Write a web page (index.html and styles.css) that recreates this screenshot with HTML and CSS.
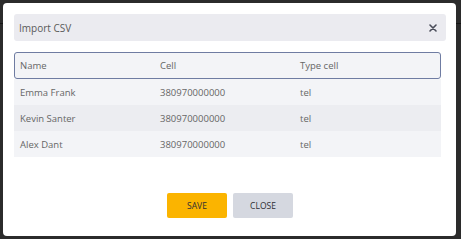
FILE: index.html
```html
<!DOCTYPE html>
<html lang="en">
<head>
  <meta charset="UTF-8">
  <title>Import CSV</title>
  <link rel="stylesheet" href="styles.css">
</head>
<body>
  <div class="modal">
    <div class="modal-head">
      <span class="modal-title">Import CSV</span>
      <button class="close-x" aria-label="Close">
        <svg width="8" height="8" viewBox="0 0 8 8">
          <path d="M1 1L7 7M7 1L1 7" stroke="#4a4d5a" stroke-width="1.6" stroke-linecap="round"/>
        </svg>
      </button>
    </div>

    <div class="csv-table">
      <div class="row head">
        <div>Name</div><div>Cell</div><div>Type cell</div>
      </div>
      <div class="row">
        <div>Emma Frank</div><div>380970000000</div><div>tel</div>
      </div>
      <div class="row alt">
        <div>Kevin Santer</div><div>380970000000</div><div>tel</div>
      </div>
      <div class="row">
        <div>Alex Dant</div><div>380970000000</div><div>tel</div>
      </div>
    </div>

    <div class="actions">
      <button class="btn save">SAVE</button>
      <button class="btn close">CLOSE</button>
    </div>
  </div>
</body>
</html>
```

FILE: styles.css
```css
/* Page behind the dialog (dark overlay with the header edge showing through) */
body {
  margin: 0;
  padding: 3px 5px 3px 3px;
  height: 239px;
  box-sizing: border-box;
  background: linear-gradient(#2b2b2b 23px, #151515 23px, #151515 24px, #2b2b2b 24px);
  font-family: "Open Sans", sans-serif;
  color: #666;
}

.modal {
  background: #fff;
  border-radius: 4px;
  height: 233px;
  box-sizing: border-box;
  padding: 11px 10px 0 11px;
  display: flex;
  flex-direction: column;
}

/* Title bar */
.modal-head {
  height: 27px;
  background: #ebebf0;
  border-radius: 3px;
  display: flex;
  align-items: center;
  justify-content: space-between;
  padding: 0 9px 0 5px;
}
.modal-title { font-size: 10px; color: #5a5a5a; }
.close-x {
  border: 0;
  background: none;
  padding: 0;
  display: flex;
}

/* Table */
.csv-table {
  margin: 11px 5px 0 0;
}
.row {
  display: grid;
  grid-template-columns: 140px 140px 1fr;
  height: 26px;
  align-items: center;
  padding-left: 6px;
  font-size: 9.5px;
  background: #f3f4f7;
}
.row.alt { background: #ecedf1; }
.row.head {
  height: 27px;
  box-sizing: border-box;
  border: 1px solid #6f7ca2;
  border-radius: 3px;
  padding-left: 5px;
}

/* Footer buttons */
.actions {
  display: flex;
  justify-content: center;
  gap: 6px;
  margin-top: 36px;
}
.btn {
  width: 60px;
  height: 25px;
  border: 0;
  border-radius: 2px;
  font-family: "Open Sans", sans-serif;
  font-size: 8.5px;
  font-weight: 500;
  color: #2e2e33;
  padding: 0;
}
.save { background: #fbb400; }
.close { background: #d5d8e0; }
```
